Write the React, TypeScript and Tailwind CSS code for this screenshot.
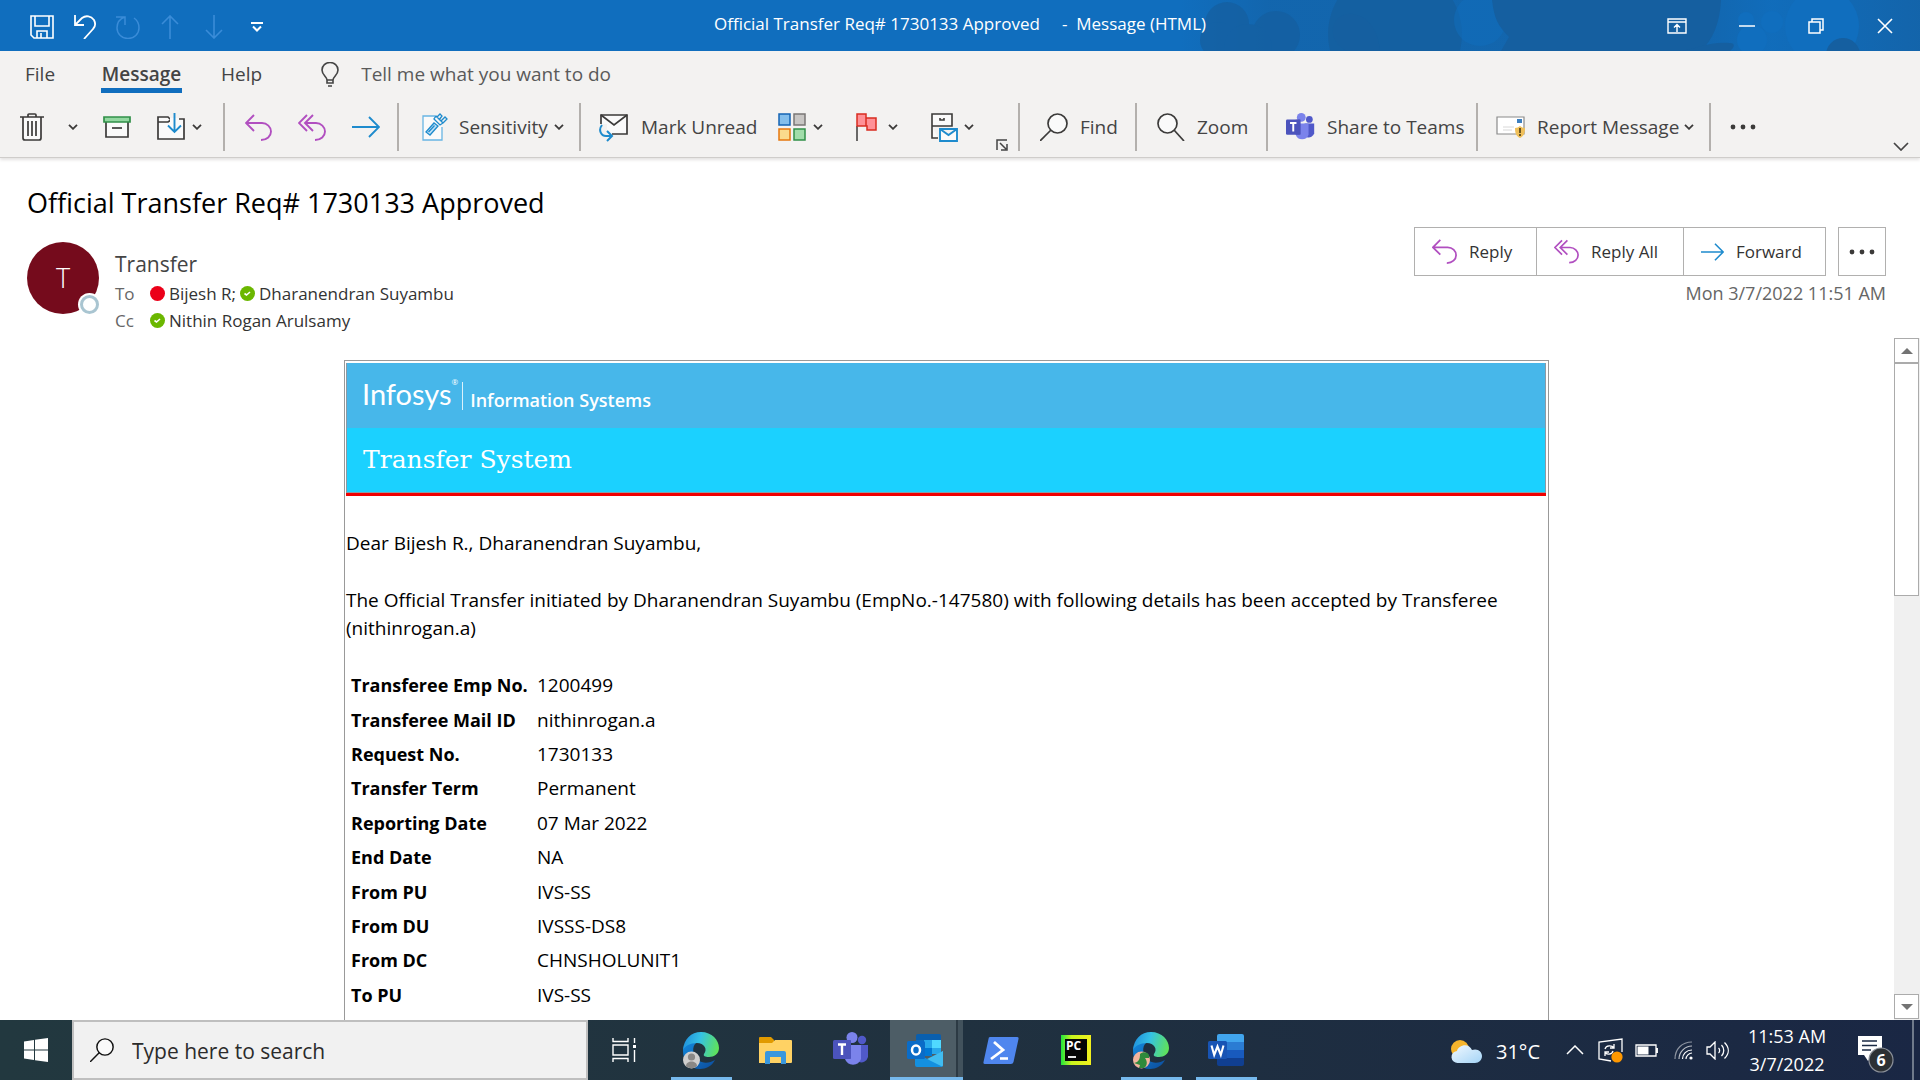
import React from "react";

type IconProps = { className?: string };

const Chevron = ({ className = "" }: IconProps) => (
  <svg className={`shrink-0 ${className}`} width="10" height="6" viewBox="0 0 10 6" fill="none" stroke="#3b3a39" strokeWidth="1.8">
    <path d="M1 .8 5 4.8 9 .8" />
  </svg>
);

const Save = () => (
  <svg width="24" height="24" viewBox="0 0 24 24" fill="none" stroke="#fff" strokeWidth="1.6">
    <path d="M1 1h22v22H4l-3-3zM5 1v10h14V1M7 23v-7h10v7M11 18v5" />
  </svg>
);
const Undo = () => (
  <svg width="24" height="24" viewBox="0 0 24 24" fill="none" stroke="#fff" strokeWidth="1.8">
    <path d="M1 0v10h9M1 10 8 3c4-3 9-2 12 2 2 4 1 7-1 9l-9 10" />
  </svg>
);
const Redo = () => (
  <svg width="24" height="24" viewBox="0 0 24 24" fill="none" stroke="#3a8cd8" strokeWidth="1.5">
    <path d="M0 2h9v8M9 2C3 4 1 8 1 13a11 10.500 0 0 0 22 0c0-4-2-8-5-10" />
  </svg>
);
const ArrowUp = () => (
  <svg width="18" height="24" viewBox="0 0 18 24" fill="none" stroke="#3a8cd8" strokeWidth="1.6">
    <path d="M9 24V1M1 9l8-8 8 8" />
  </svg>
);
const ArrowDown = () => (
  <svg width="18" height="24" viewBox="0 0 18 24" fill="none" stroke="#3a8cd8" strokeWidth="1.6">
    <path d="M9 0v23M1 15l8 8 8-8" />
  </svg>
);
const Customize = () => (
  <svg width="12" height="10" viewBox="0 0 12 10" fill="none" stroke="#fff" strokeWidth="2">
    <path d="M0 1h12M2 4.500l4 4 4-4" />
  </svg>
);

const TitlePattern = () => (
  <svg className="absolute inset-y-0 right-0" width="740" height="51" viewBox="0 0 740 51">
    <defs>
      <linearGradient id="haze" x1="0" x2="1" y1="0" y2="0">
        <stop offset="0" stopColor="#155fa0" stopOpacity="0" />
        <stop offset=".12" stopColor="#155fa0" stopOpacity=".55" />
        <stop offset=".7" stopColor="#155fa0" stopOpacity=".55" />
        <stop offset=".8" stopColor="#155fa0" stopOpacity=".1" />
        <stop offset="1" stopColor="#155fa0" stopOpacity=".65" />
      </linearGradient>
    </defs>
    <rect width="740" height="51" fill="url(#haze)" />
    <g fill="#155fa0">
      <g opacity=".75">
        <circle cx="47" cy="24" r="22" />
        <circle cx="38" cy="40" r="18" />
        <circle cx="96" cy="35" r="24" />
        <circle cx="68" cy="48" r="24" />
      </g>
      <circle cx="215" cy="34" r="67" opacity=".9" />
      <path d="M167 51c-16-8-18-24-9-33 16-12 40 2 42 33z" />
    </g>
    <circle cx="300" cy="20" r="26" fill="#106ebe" opacity=".5" />
    <path d="M312 0c2 18 6 26 17 37l-8 14h200c12-12 19-28 20-51z" fill="#155fa0" />
    <path d="M500 51c16-2 30-10 50-8 6 0 4 5 0 8z" fill="#155fa0" />
    <g fill="#106ebe">
      <ellipse cx="642" cy="26" rx="37" ry="38" />
      <circle cx="592" cy="22" r="11" />
      <circle cx="566" cy="20" r="8" />
      <circle cx="572" cy="40" r="15" />
    </g>
    <circle cx="663" cy="55" r="17" fill="#155fa0" />
  </svg>
);

const RibbonMode = () => (
  <svg width="20" height="16" viewBox="0 0 20 16" fill="none" stroke="#fff" strokeWidth="1.400">
    <path d="M1 1h18v14H1zM1 4h18M10 14V7M7 9.500l3-3 3 3" />
  </svg>
);
const Minimize = () => (
  <svg width="16" height="16" viewBox="0 0 16 16" stroke="#fff" strokeWidth="1.500">
    <path d="M0 8h16" />
  </svg>
);
const Restore = () => (
  <svg width="16" height="16" viewBox="0 0 16 16" fill="none" stroke="#fff" strokeWidth="1.500">
    <path d="M1 4h11v11H1zM4 4V1h11v11h-3" />
  </svg>
);
const Close = () => (
  <svg width="16" height="16" viewBox="0 0 16 16" stroke="#fff" strokeWidth="1.600">
    <path d="M1 1l14 14M15 1 1 15" />
  </svg>
);

const Bulb = () => (
  <svg width="18" height="25" viewBox="0 0 18 25" fill="none" stroke="#444" strokeWidth="1.600">
    <path d="M6 18c0-3-5-5-5-10a8 7.500 0 0 1 16 0c0 5-5 7-5 10zM6 18v3h6v-3M7 24h4" />
  </svg>
);
const Trash = () => (
  <svg width="24" height="28" viewBox="0 0 24 28" fill="none" stroke="#3b3a39" strokeWidth="1.700">
    <path d="M3 4v21q0 2 2 2h14q2 0 2-2V4" fill="#fafafa" />
    <path d="M0 4h24M8 4V2q0-1 1-1h6q1 0 1 1v2M8 8v15M12 8v15M16 8v15" />
  </svg>
);
const Archive = () => (
  <svg width="28" height="22" viewBox="0 0 28 22" fill="none" strokeWidth="1.700">
    <path d="M3 6v15h22V6" fill="#fafafa" stroke="#3b3a39" />
    <path d="M1 1h26v5H1z" fill="#92d7a0" stroke="#309048" />
    <path d="M9 12h10" stroke="#3b3a39" />
  </svg>
);
const MoveFolder = () => (
  <svg width="28" height="28" viewBox="0 0 28 28" fill="none" strokeWidth="1.700">
    <path d="M17 6h10v20H1V4h10l3 3-3 2H1" fill="#fafafa" stroke="#3b3a39" />
    <path d="M13 5h9v10h-9z" fill="#fafafa" />
    <path d="M17.500 0v19M11 12.500l6.500 6.500 6.500-6.500" stroke="#1e8bcd" strokeWidth="1.900" />
  </svg>
);
const ReplyIcon = ({ className = "" }: IconProps) => (
  <svg className={className} width="27" height="27" viewBox="0 0 27 27" fill="none" stroke="#b14fc0" strokeWidth="1.900">
    <path d="M9 1 1 9l8 8M1 9h16c5 0 9 4 9 8.500S22 26 16 26" />
  </svg>
);
const ReplyAllIcon = ({ className = "" }: IconProps) => (
  <svg className={className} width="28" height="27" viewBox="0 0 28 27" fill="none" stroke="#b14fc0" strokeWidth="1.900">
    <path d="M9 1 1 9l8 8M15 1 7 9l8 8M7 9h11c5 0 9 4 9 8.500S23 26 17 26" />
  </svg>
);
const ForwardIcon = ({ className = "" }: IconProps) => (
  <svg className={className} width="28" height="22" viewBox="0 0 28 22" fill="none" stroke="#1e8bcd" strokeWidth="1.900">
    <path d="M0 11h27M17 1l10 10-10 10" />
  </svg>
);
const SensitivityIcon = () => (
  <svg width="26" height="28" viewBox="0 0 26 28" fill="none" stroke="#1e8bcd" strokeWidth="1.300">
    <path d="M13 3H1v24h19V14" fill="#fafafa" stroke="#68b5e4" />
    <path d="m4 19 8-9 4 3-8 9z" fill="#bfe0f5" />
    <path d="m6.500 19 6-6.500M12 6l6 6 3-2-7-7zM15 4l3-3 2 2-3 4M19 8l4-4 2 2-4 4" />
  </svg>
);
const MarkUnreadIcon = () => (
  <svg width="30" height="30" viewBox="0 0 30 30" fill="none" strokeWidth="1.700">
    <path d="M2 12V3h26v19H13" fill="#fafafa" stroke="#3b3a39" />
    <path d="m2 3 13 10L28 3" stroke="#3b3a39" />
    <path d="M0 12h8v9h5v5H0z" fill="#f3f2f1" />
    <path d="M3 13c-4 5-1 11 4 11h5M8 19l5 5-5 5" stroke="#1e8bcd" strokeWidth="2" />
  </svg>
);
const Categories = () => (
  <svg width="28" height="28" viewBox="0 0 28 28" strokeWidth="1.500">
    <path d="M1 1h11v11H1z" fill="#83beec" stroke="#1464b4" />
    <path d="M16 1h11v11H16z" fill="#c8c6c4" stroke="#797775" />
    <path d="M1 16h11v11H1z" fill="#fadb8c" stroke="#e6780f" />
    <path d="M16 16h11v11H16z" fill="#a1ddaa" stroke="#309048" />
  </svg>
);
const FlagIcon = () => (
  <svg width="21" height="28" viewBox="0 0 21 28" strokeWidth="1.500">
    <path d="M1 13v15" stroke="#3b3a39" />
    <path d="M1 1h9v12H1zM10 5h10v12h-9v-4h-1z" fill="#ff9197" stroke="#d92c20" />
  </svg>
);
const FileMail = () => (
  <svg width="27" height="29" viewBox="0 0 27 29" fill="none" strokeWidth="1.600">
    <path d="M1 1h20v12H1zM1 13v12h6M9 5v2h4V5" fill="#fafafa" stroke="#3b3a39" />
    <path d="M9 16h17v12H9zl8.500 6 8.500-6" fill="#fafafa" stroke="#1e8bcd" strokeWidth="1.900" />
  </svg>
);
const Launcher = () => (
  <svg width="12" height="12" viewBox="0 0 12 12" fill="none" stroke="#444" strokeWidth="1.500">
    <path d="M1 11V1h10M4 4l6 6M11 5v6H5" />
  </svg>
);
const Magnifier = ({ flip = false, color = "#3b3a39", size = 28 }: { flip?: boolean; color?: string; size?: number }) => (
  <svg width={size} height={size} viewBox="0 0 28 28" fill="none" stroke={color} strokeWidth="1.700" className="shrink-0">
    {flip ? (
      <g>
        <circle cx="10.500" cy="10.500" r="9.500" fill="#fafafa" />
        <path d="m17 17 10 11" />
      </g>
    ) : (
      <g>
        <circle cx="17.500" cy="10.500" r="9.500" fill="#fafafa" />
        <path d="M11 17 0 28" />
      </g>
    )}
  </svg>
);
const Teams = ({ size = 29 }: { size?: number }) => (
  <svg width={size} height={size} viewBox="0 0 36 36" className="shrink-0">
    <circle cx="29" cy="8" r="4.200" fill="#5059c9" />
    <path d="M23 13h12v12a7 7 0 0 1-9 5z" fill="#5059c9" />
    <circle cx="19" cy="5.500" r="5.500" fill="#7b83eb" />
    <path d="M12 13h16v14a8.500 8.500 0 0 1-16 0z" fill="#7b83eb" />
    <path d="M12 8h6v19h-6z" fill="#3c43a8" opacity=".45" />
    <rect y="8" width="18" height="19" rx="1.500" fill="#4b53bc" />
    <path d="M5 12.500h8M9 12.500V23" stroke="#fff" strokeWidth="2.400" />
  </svg>
);
const ReportIcon = () => (
  <svg width="30" height="22" viewBox="0 0 30 22">
    <path d="M1 1h27v17H1z" fill="#fff" stroke="#8a8a8a" strokeWidth="1.200" />
    <path d="M21 3h5v4h-5z" fill="#3c7fc0" />
    <path d="M7 11h11M7 14h9" stroke="#d8d8d8" />
    <path d="M19 12q3 0 5-2 2 2 5 2c0 5-1 8-5 10-4-2-5-5-5-10z" fill="#f0c05a" />
    <path d="M24 12v5M24 18v2" stroke="#4a3a14" strokeWidth="1.600" />
  </svg>
);
const Dots = () => (
  <svg width="26" height="6" viewBox="0 0 26 6" fill="#3b3a39">
    <circle cx="3" cy="3" r="2.400" />
    <circle cx="13" cy="3" r="2.400" />
    <circle cx="23" cy="3" r="2.400" />
  </svg>
);
const CollapseRibbon = () => (
  <svg width="16" height="9" viewBox="0 0 16 9" fill="none" stroke="#444" strokeWidth="1.700">
    <path d="m1 1 7 7 7-7" />
  </svg>
);

const Available = () => (
  <svg width="15" height="15" viewBox="0 0 15 15" className="shrink-0">
    <circle cx="7.500" cy="7.500" r="7.500" fill="#6bb700" />
    <path d="m4.500 7.500 2 1.500 3.500-3" fill="none" stroke="#fff" strokeWidth="1.600" />
  </svg>
);
const Busy = () => <span className="size-[15px] shrink-0 rounded-full bg-[#eb0019]" />;

const Triangle = ({ down = false }: { down?: boolean }) => (
  <svg width="12" height="6" viewBox="0 0 12 6" fill="#737373">
    <path d={down ? "M0 0h12L6 6z" : "M0 6h12L6 0z"} />
  </svg>
);

const WindowsLogo = () => (
  <svg width="24" height="24" viewBox="0 0 24 24" fill="#fff">
    <path d="M0 3.400 10 2v9.500H0zM11 1.800 24 0v11.500H11zM0 12.500h10V22L0 20.600zM11 12.500h13V24l-13-1.800z" />
  </svg>
);
const TaskView = () => (
  <svg width="24" height="24" viewBox="0 0 24 24" fill="none" stroke="#fff" strokeWidth="1.400">
    <path d="M1 0v3.500h15V0M1 7h15v10H1zM1 24v-3.500h15V24M22.500 0v5M22.500 12v12" />
    <path d="M21 7h3v3h-3z" fill="#fff" stroke="none" />
  </svg>
);
const Edge = ({ badge }: { badge: "person" | "dino" }) => (
  <svg width="37" height="37" viewBox="0 0 37 37">
    <defs>
      <linearGradient id={`edge-top-${badge}`} x1="0" y1=".3" x2="1" y2=".5">
        <stop offset="0" stopColor="#1f8fdc" />
        <stop offset=".45" stopColor="#35c1e4" />
        <stop offset="1" stopColor="#5fe25a" />
      </linearGradient>
      <linearGradient id={`edge-low-${badge}`} x1="0" y1="0" x2="1" y2="1">
        <stop offset="0" stopColor="#1389dc" />
        <stop offset="1" stopColor="#0c4c9c" />
      </linearGradient>
    </defs>
    <path d="M1 19C1 10 8 9 14 11c-4 3-4 12 2 17 5 4 12 3 17 0-3 6-9 9-15 9C8 37 1 29 1 19z" fill={`url(#edge-low-${badge})`} />
    <path d="M1 18C2 7 9 0 19 0c11 0 18 8 18 16 0 6-5 9-10 9-4 0-6-1-5-3 4-5 0-11-7-11C8 11 3 14 1 18z" fill={`url(#edge-top-${badge})`} />
    {badge === "person" ? (
      <g>
        <circle cx="9.500" cy="28" r="8.500" fill="#d0cfce" />
        <circle cx="9.500" cy="25" r="3.600" fill="#8a8886" />
        <path d="M4 34c0-6 11-6 11 0-3 3-8 3-11 0z" fill="#8a8886" />
      </g>
    ) : (
      <g>
        <circle cx="9.500" cy="28" r="8.500" fill="#f2b59f" />
        <path d="M2 31c5-1 6-4 6-9 3-3 8-2 9 1v3h-4c3 4 2 8-1 10H7l1-3z" fill="#2f8a3c" />
      </g>
    )}
  </svg>
);
const Folder = () => (
  <svg width="33" height="27" viewBox="0 0 33 27">
    <path d="M0 1q0-1 1-1h11l3 3v5H0z" fill="#e19a00" />
    <path d="M0 6h13l3-3h16q1 0 1 1v21q0 1-1 1H0z" fill="#ffd264" />
    <path d="M6 27V16q0-2 2-2h17q2 0 2 2v11h-5v-7H11v7z" fill="#3a97dd" />
  </svg>
);
const Outlook = () => (
  <svg width="36" height="33" viewBox="0 0 36 33">
    <path d="M11 0h21q2 0 2 2v15H9V2q0-2 2-2z" fill="#0a5fae" />
    <path d="M9 6h8v8H9z" fill="#0f6cbd" />
    <path d="M17 6h8v8h-8z" fill="#28a8ea" />
    <path d="M25 6h9v8h-9z" fill="#50d9ff" />
    <path d="M17 14h8v8h-8z" fill="#0078d4" />
    <path d="M25 14h9v6h-9z" fill="#28a8ea" />
    <path d="M36 17v14q0 2-2 2H10q-2 0-2-2V18l14 8z" fill="#1490df" />
    <path d="M36 17v14q0 1-1 1.500L20 25z" fill="#41bdf0" />
    <rect y="7" width="18" height="18" rx="1.500" fill="#0a6cc8" />
    <ellipse cx="9" cy="16" rx="4" ry="4.600" fill="none" stroke="#fff" strokeWidth="2.500" />
  </svg>
);
const PowerShell = () => (
  <svg width="36" height="27" viewBox="0 0 36 27">
    <path d="M7 0h27q2 0 1.500 2l-5 23q-.5 2-2.500 2H2q-2 0-1.500-2l5-23Q5.500 0 7 0z" fill="#4f86ee" />
    <path d="m11 5 9 8-12 9" fill="none" stroke="#fff" strokeWidth="2.800" />
    <path d="M17 21.500h8" stroke="#fff" strokeWidth="2.600" />
  </svg>
);
const PyCharm = () => (
  <svg width="30" height="30" viewBox="0 0 30 30">
    <defs>
      <linearGradient id="pycharm" x1="0" x2="1" y1="0" y2="0">
        <stop offset="0" stopColor="#21e53c" />
        <stop offset=".35" stopColor="#c8f51e" />
        <stop offset="1" stopColor="#f2f01e" />
      </linearGradient>
    </defs>
    <path d="M0 0h30v30H0z" fill="url(#pycharm)" />
    <path d="M4 4h22v22H4z" fill="#050505" />
    <text x="5" y="15" fontSize="12" fontWeight="700" fill="#fff" fontFamily="Open Sans, sans-serif">PC</text>
    <path d="M7 22h8" stroke="#fff" strokeWidth="1.800" />
  </svg>
);
const Word = () => (
  <svg width="36" height="32" viewBox="0 0 36 32">
    <path d="M9 2q0-2 2-2h23q2 0 2 2v6H9z" fill="#41a5ee" />
    <path d="M9 8h27v8H9z" fill="#2b7cd3" />
    <path d="M9 16h27v8H9z" fill="#185abd" />
    <path d="M9 24h27v6q0 2-2 2H11q-2 0-2-2z" fill="#103f91" />
    <rect y="7" width="19" height="18" rx="1.500" fill="#1854b4" />
    <path d="m3.500 11.500 2.700 9.500 3.300-8.500 3.300 8.500 2.700-9.500" fill="none" stroke="#fff" strokeWidth="2.100" />
  </svg>
);

const Weather = () => (
  <svg width="31" height="24" viewBox="0 0 31 24">
    <defs>
      <linearGradient id="cloud" x1="0" y1="0" x2="1" y2="1">
        <stop offset="0" stopColor="#f2f9ff" />
        <stop offset="1" stopColor="#a4d4f7" />
      </linearGradient>
    </defs>
    <circle cx="9" cy="9" r="9" fill="#f7b52c" />
    <path d="M7 23a6 6 0 0 1-1-12c1-6 12-9 15-1 6-2 10 2 10 6s-3 7-7 7z" fill="url(#cloud)" />
  </svg>
);
const TrayChevron = () => (
  <svg width="18" height="10" viewBox="0 0 18 10" fill="none" stroke="#fff" strokeWidth="1.500">
    <path d="m1 9 8-8 8 8" />
  </svg>
);
const SyncIcon = () => (
  <svg width="25" height="25" viewBox="0 0 25 25" fill="none" stroke="#fff" strokeWidth="1.300">
    <path d="M24 14V1L1 4v17l12 2" />
    <path d="M7 11c1-4 7-4 9-1M16 6v4h-4M15 13c-1 4-7 4-8 1M7 18v-4h4" />
    <circle cx="19" cy="19" r="5.600" fill="#ff9800" stroke="none" />
  </svg>
);
const Battery = () => (
  <svg width="23" height="13" viewBox="0 0 23 13" fill="none" stroke="#fff" strokeWidth="1.300">
    <path d="M1 1h20v11H1zM22.300 4v5" />
    <path d="M2.500 2.500h11v8h-11z" fill="#fff" stroke="none" />
  </svg>
);
const Wifi = () => (
  <svg width="19" height="19" viewBox="0 0 19 19" fill="none" stroke="#fff" strokeWidth="1.200">
    <path d="M1 18C1 8 8 1 18 1" opacity=".5" />
    <path d="M5 18C5 11 11 5 18 5" opacity=".7" />
    <path d="M8.500 18c0-5 4-9 9.500-9M12 18c0-3 3-6 6-6" />
    <circle cx="17" cy="17" r="1.600" fill="#fff" stroke="none" />
  </svg>
);
const Volume = () => (
  <svg width="23" height="19" viewBox="0 0 23 19" fill="none" stroke="#fff" strokeWidth="1.300">
    <path d="M1 6v7h3l5 5V1L4 6zM12.500 7c1.500 1 1.500 4 0 5M15.500 4c3 3 3 8 0 11M18.500 1.500c5 5 5 11 0 16" />
  </svg>
);
const Notifications = () => (
  <svg width="38" height="38" viewBox="0 0 38 38">
    <path d="M1 1h24v19H16l-5 6-4-6H1z" fill="#fff" />
    <path d="M5 6h15M5 10.500h15M5 15h9" stroke="#1b2a44" strokeWidth="1.400" />
    <circle cx="24" cy="25" r="12" fill="#2c3034" stroke="#8b9099" strokeWidth="1.200" />
    <text x="24" y="31" textAnchor="middle" fontSize="16" fontWeight="700" fill="#fff" fontFamily="Open Sans, sans-serif">6</text>
  </svg>
);

const groupClass = "flex h-12 items-center border-r-2 border-[#b3b0ad]";
const textButton = "flex items-center whitespace-nowrap";

const rows = [
  ["Transferee Emp No.", "1200499"],
  ["Transferee Mail ID", "nithinrogan.a"],
  ["Request No.", "1730133"],
  ["Transfer Term", "Permanent"],
  ["Reporting Date", "07 Mar 2022"],
  ["End Date", "NA"],
  ["From PU", "IVS-SS"],
  ["From DU", "IVSSS-DS8"],
  ["From DC", "CHNSHOLUNIT1"],
  ["To PU", "IVS-SS"],
];

function TitleBar() {
  return (
    <header className="relative flex h-[51px] shrink-0 items-center justify-center bg-[#106ebe] text-white">
      <TitlePattern />
      <div className="absolute inset-y-0 left-[30px] flex items-center pt-[2px]">
        <button aria-label="Save" className="mr-5"><Save /></button>
        <button aria-label="Undo" className="mr-[18px]"><Undo /></button>
        <button aria-label="Redo" className="mr-[21px]"><Redo /></button>
        <button aria-label="Previous item" className="mr-[26px]"><ArrowUp /></button>
        <button aria-label="Next item" className="mr-7"><ArrowDown /></button>
        <button aria-label="Customize toolbar"><Customize /></button>
      </div>
      <h2 className="relative pb-1 text-[17px] whitespace-pre">{"Official Transfer Req# 1730133 Approved     -  Message (HTML)"}</h2>
      <div className="absolute inset-y-0 right-[27px] flex items-center">
        <button aria-label="Ribbon display options" className="mr-[52px]"><RibbonMode /></button>
        <button aria-label="Minimize" className="mr-[53px]"><Minimize /></button>
        <button aria-label="Restore" className="mr-[53px]"><Restore /></button>
        <button aria-label="Close"><Close /></button>
      </div>
    </header>
  );
}

function Ribbon() {
  return (
    <section className="shrink-0 border-b border-[#cfcdcb] bg-[#f3f2f1] pb-[6px] text-[19px] text-[#444] shadow-[0_2px_3px_#e4e3e2]">
      <nav className="flex h-[52px] items-start pl-[25px]">
        <button className="mr-[46px] h-[42px] pt-1">File</button>
        <button className="mr-[39px] flex h-[42px] w-[81px] items-end justify-center border-b-[5px] border-[#106ebe] leading-7 font-semibold">Message</button>
        <button className="mr-[59px] h-[42px] pt-1">Help</button>
        <label className="flex h-[42px] flex-1 items-center gap-[22px] pt-1">
          <Bulb />
          <input aria-label="Tell me what you want to do" placeholder="Tell me what you want to do" className="w-80 bg-transparent outline-none placeholder:text-[#5a5a5a]" />
        </label>
      </nav>
      <div className="flex">
        <div className={`${groupClass} w-[225px] pl-5`}>
          <button aria-label="Delete" className="mr-6"><Trash /></button>
          <button aria-label="Delete options" className="mr-[25px]"><Chevron /></button>
          <button aria-label="Archive" className="mr-[26px]"><Archive /></button>
          <button aria-label="Move" className="flex items-center gap-[7px]"><MoveFolder /><Chevron /></button>
        </div>
        <div className={`${groupClass} w-[174px] gap-[26px] pl-5`}>
          <button aria-label="Reply"><ReplyIcon /></button>
          <button aria-label="Reply all"><ReplyAllIcon /></button>
          <button aria-label="Forward"><ForwardIcon /></button>
        </div>
        <div className={`${groupClass} w-[182px] pl-[23px]`}>
          <button className={textButton}><SensitivityIcon /><span className="mr-[6px] ml-[11px]">Sensitivity</span><Chevron /></button>
        </div>
        <div className={`${groupClass} w-[439px] pl-[18px]`}>
          <button className={`${textButton} w-[179px] gap-3`}><MarkUnreadIcon />Mark Unread</button>
          <button aria-label="Categorize" className="mr-[33px] flex items-center gap-[7px]"><Categories /><Chevron /></button>
          <button aria-label="Follow up" className="mr-[33px] flex items-center gap-[11px]"><FlagIcon /><Chevron /></button>
          <button aria-label="File email" className="mr-[22px] flex items-center gap-[6px]"><FileMail /><Chevron /></button>
          <button aria-label="More move options" className="self-end"><Launcher /></button>
        </div>
        <div className={`${groupClass} w-[117px] pl-5`}>
          <button className={`${textButton} gap-3`}><Magnifier />Find</button>
        </div>
        <div className={`${groupClass} w-[131px] pl-5`}>
          <button className={`${textButton} gap-3`}><Magnifier flip />Zoom</button>
        </div>
        <div className={`${groupClass} w-[210px] pl-[18px]`}>
          <button className={`${textButton} gap-3`}><Teams />Share to Teams</button>
        </div>
        <div className={`${groupClass} w-[233px] pl-[18px]`}>
          <button className={textButton}><ReportIcon /><span className="mr-[5px] ml-[11px]">Report Message</span><Chevron /></button>
        </div>
        <div className="flex h-12 flex-1 items-center justify-between pr-[11px] pl-[19px]">
          <button aria-label="More commands"><Dots /></button>
          <button aria-label="Collapse ribbon" className="self-end"><CollapseRibbon /></button>
        </div>
      </div>
    </section>
  );
}

function MessageHeader() {
  const action = "flex items-center border-r border-[#b1b0af] pl-[17px]";
  return (
    <section className="flex h-[180px] shrink-0 justify-between pr-[34px] pl-[27px]">
      <div>
        <h1 className="pt-[26px] text-[27px] leading-[38px] text-black">Official Transfer Req# 1730133 Approved</h1>
        <div className="mt-5 flex gap-4">
          <div className="relative flex size-[72px] items-center justify-center rounded-full bg-[#750b1c] text-[27px] font-light text-white">
            T
            <span className="absolute right-0 bottom-0 size-[19px] rounded-full border-[3px] border-[#a9c5d1] bg-white ring-2 ring-white" />
          </div>
          <div className="text-[17px] leading-[27px] text-[#333]">
            <p className="mt-2 text-[21px] leading-7 text-[#444]">Transfer</p>
            <p className="mt-[2px] flex items-center gap-1">
              <span className="w-[31px] text-[#666]">To</span>
              <Busy />
              <span>Bijesh R;</span>
              <Available />
              <span>Dharanendran Suyambu</span>
            </p>
            <p className="flex items-center gap-1">
              <span className="w-[31px] text-[#666]">Cc</span>
              <Available />
              <span>Nithin Rogan Arulsamy</span>
            </p>
          </div>
        </div>
      </div>
      <div className="flex flex-col items-end pt-[69px] text-[17px] text-[#333]">
        <div className="flex h-[49px] gap-3">
          <div className="flex border border-r-0 border-[#b1b0af]">
            <button className={`${action} w-[122px] gap-3`}><ReplyIcon className="size-[25px]" />Reply</button>
            <button className={`${action} w-[147px] gap-3`}><ReplyAllIcon className="size-[25px]" />Reply All</button>
            <button className={`${action} w-[142px] gap-3`}><ForwardIcon className="w-[23px]" />Forward</button>
          </div>
          <button aria-label="More actions" className="flex w-12 items-center justify-center border border-[#b1b0af]"><Dots /></button>
        </div>
        <time className="mt-1 text-[18px] leading-[26px] text-[#666]">Mon 3/7/2022 11:51 AM</time>
      </div>
    </section>
  );
}

function MessageBody() {
  return (
    <div className="flex min-h-0 flex-1">
      <main className="min-w-0 flex-1 overflow-hidden pt-[22px] pr-px text-[19px] leading-7 text-black">
        <article className="mx-auto min-h-[720px] w-full max-w-[1205px] border border-[#999] p-[2px] pl-px">
          <div className="border-b-[3px] border-[#f00000]">
            <div className="border border-t-0 border-[#8c9aa5] text-white">
              <div className="flex h-[65px] items-center bg-[#47b7ea] pl-[15px]">
                <span className="pb-1 font-['Lato',sans-serif] text-[29px]">Infosys</span>
                <sup className="mb-5 text-[8px]">®</sup>
                <span className="mr-[7px] ml-1 h-7 w-px bg-white/80" />
                <span className="pt-2 text-[18px] font-semibold">Information Systems</span>
              </div>
              <div className="flex h-16 items-center bg-[#1bd1ff] pl-4 font-['DejaVu_Serif',serif] text-[25px]">Transfer System</div>
            </div>
          </div>
          <p className="mt-[33px]">Dear Bijesh R., Dharanendran Suyambu,</p>
          <p className="mt-[29px]">
            The Official Transfer initiated by Dharanendran Suyambu (EmpNo.-147580) with following details has been accepted by Transferee (nithinrogan.a)
          </p>
          <table className="mt-[26px] ml-[5px] h-[344px] text-left">
            <tbody>
              {rows.map(([label, value]) => (
                <tr key={label}>
                  <th scope="row" className="w-[186px] p-0 text-[18px] font-bold whitespace-nowrap">{label}</th>
                  <td className="p-0">{value}</td>
                </tr>
              ))}
            </tbody>
          </table>
        </article>
      </main>
      <div className="flex w-[26px] flex-col bg-[#f0f0f0] pb-[1px]">
        <button aria-label="Scroll up" className="flex h-[25px] w-[25px] items-center justify-center border border-[#ababab] bg-white"><Triangle /></button>
        <div className="h-[233px] w-[25px] border border-[#ababab] bg-white" />
        <button aria-label="Scroll down" className="mt-auto flex h-[25px] w-[25px] items-center justify-center border border-[#ababab] bg-white"><Triangle down /></button>
      </div>
    </div>
  );
}

function TaskButton({ label, running = false, children }: { label: string; running?: boolean; children: React.ReactNode }) {
  return (
    <button aria-label={label} className="relative flex h-[60px] w-[75px] items-center justify-center">
      {children}
      {running && <span className="absolute bottom-0 left-2 h-[3px] w-[61px] bg-[#76b9ed]" />}
    </button>
  );
}

function Taskbar() {
  return (
    <footer className="flex h-[60px] shrink-0 items-center bg-linear-to-r from-[#22383f] via-[#20313f] to-[#1a2744] text-white">
      <button aria-label="Start" className="flex w-[72px] justify-center"><WindowsLogo /></button>
      <label className="flex h-[60px] w-[516px] items-center gap-[18px] border-2 border-[#bfbfbf] bg-[#f1f1f1] pl-4">
        <Magnifier color="#111" size={24} />
        <input aria-label="Type here to search" placeholder="Type here to search" className="w-full bg-transparent pt-1 text-[21px] outline-none placeholder:text-[#2b2b2b]" />
      </label>
      <button aria-label="Task view" className="flex w-[75px] justify-center pr-1"><TaskView /></button>
      <TaskButton label="Edge, personal profile" running><Edge badge="person" /></TaskButton>
      <TaskButton label="File Explorer"><Folder /></TaskButton>
      <TaskButton label="Teams"><Teams size={36} /></TaskButton>
      <button aria-label="Outlook" className="ml-0.5 flex h-[60px] w-[73px] border-b-[3px] border-[#76b9ed]">
        <span className="flex h-full flex-1 items-center justify-center bg-[#4d5d66] pt-[3px] pl-1"><Outlook /></span>
        <span className="h-full w-[7px] border-l-2 border-[#2c3a44] bg-[#42525c]" />
      </button>
      <TaskButton label="PowerShell"><PowerShell /></TaskButton>
      <TaskButton label="PyCharm"><PyCharm /></TaskButton>
      <TaskButton label="Edge, second profile" running><Edge badge="dino" /></TaskButton>
      <TaskButton label="Word" running><Word /></TaskButton>
      <div className="ml-auto flex h-[60px] items-center">
        <button className="mr-[25px] flex w-[90px] items-center gap-[14px] pt-1 text-[20px] whitespace-nowrap"><Weather />31°C</button>
        <button aria-label="Show hidden icons" className="mr-[14px]"><TrayChevron /></button>
        <button aria-label="Updates" className="mr-3"><SyncIcon /></button>
        <button aria-label="Battery" className="mr-4"><Battery /></button>
        <button aria-label="Network" className="mr-[13px]"><Wifi /></button>
        <button aria-label="Volume" className="mr-4"><Volume /></button>
        <button className="mr-7 w-[84px] text-center text-[18px] leading-7 whitespace-nowrap"><span className="block">11:53 AM</span><span className="block">3/7/2022</span></button>
        <button aria-label="Notifications" className="mr-[17px] pt-2"><Notifications /></button>
        <button aria-label="Show desktop" className="h-[60px] w-2 border-l-2 border-[#6f7a8b]" />
      </div>
    </footer>
  );
}

export default function App() {
  return (
    <div className="flex h-screen flex-col overflow-hidden bg-white font-['Open_Sans','Noto_Sans',sans-serif]">
      <TitleBar />
      <Ribbon />
      <MessageHeader />
      <MessageBody />
      <Taskbar />
    </div>
  );
}
